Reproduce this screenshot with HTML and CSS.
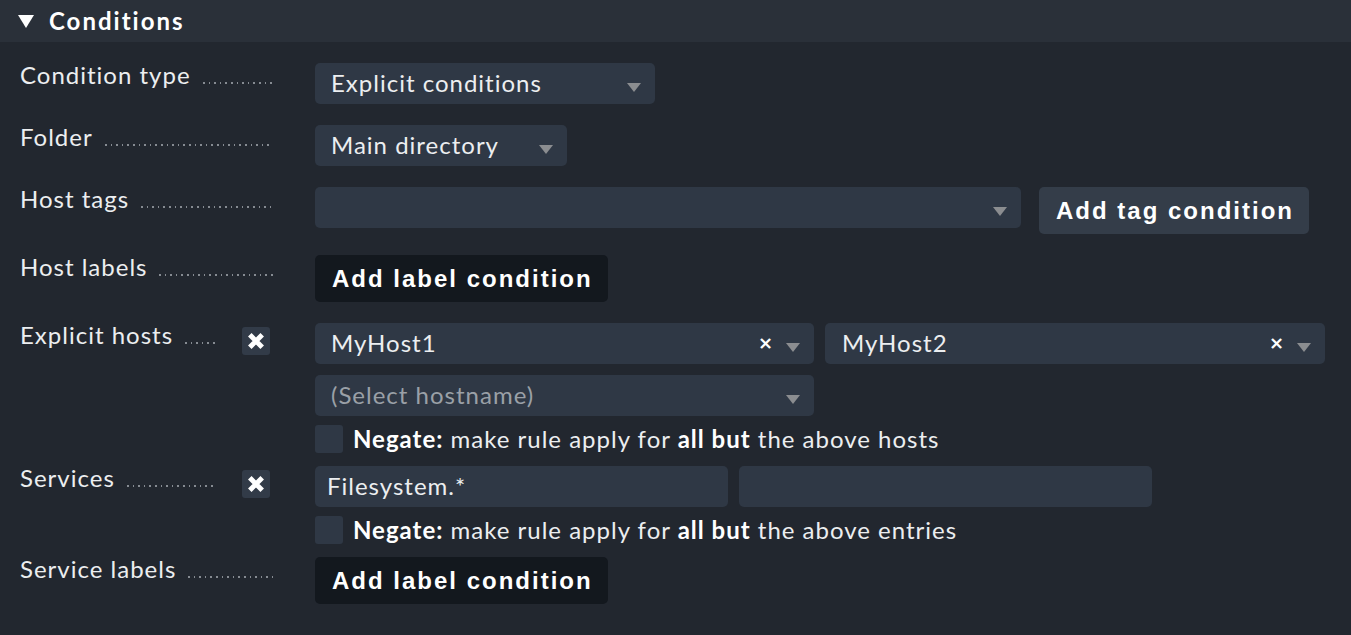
FILE: index.html
```html
<!DOCTYPE html>
<html>
<head>
<meta charset="utf-8">
<link rel="stylesheet" href="styles.css">
</head>
<body>
<div class="panel">
  <div class="head"><span class="tri"></span><span class="title">Conditions</span></div>
  <div class="body">
    <div class="row">
      <div class="label"><span class="ltext">Condition type</span><span class="dots"></span></div>
      <div class="ctrl">
        <div class="select w-type"><span class="val">Explicit conditions</span><span class="arrow"></span></div>
      </div>
    </div>
    <div class="row">
      <div class="label"><span class="ltext">Folder</span><span class="dots"></span></div>
      <div class="ctrl">
        <div class="select w-folder"><span class="val">Main directory</span><span class="arrow"></span></div>
      </div>
    </div>
    <div class="row">
      <div class="label"><span class="ltext">Host tags</span><span class="dots"></span></div>
      <div class="ctrl">
        <div class="line">
          <div class="select w-tags"><span class="val"></span><span class="arrow"></span></div>
          <button class="btn btn-light">Add tag condition</button>
        </div>
      </div>
    </div>
    <div class="row">
      <div class="label"><span class="ltext">Host labels</span><span class="dots"></span></div>
      <div class="ctrl">
        <button class="btn btn-dark">Add label condition</button>
      </div>
    </div>
    <div class="row tight">
      <div class="label"><span class="ltext">Explicit hosts</span><span class="dots"></span>
        <span class="del"><svg width="18" height="18" viewBox="0 0 18 18"><path d="M2.8 2.8 L15.2 15.2 M15.2 2.8 L2.8 15.2" stroke="#fff" stroke-width="5" stroke-linecap="butt"/></svg></span>
      </div>
      <div class="ctrl">
        <div class="line gap11">
          <div class="select w-host"><span class="val">MyHost1</span><span class="clear">×</span><span class="arrow"></span></div>
          <div class="select w-host2"><span class="val">MyHost2</span><span class="clear">×</span><span class="arrow"></span></div>
        </div>
        <div class="select w-host mt11"><span class="val ph">(Select hostname)</span><span class="arrow"></span></div>
        <div class="negate"><span class="cb"></span><span class="ntext"><b>Negate:</b> make rule apply for <b>all but</b> the above hosts</span></div>
      </div>
    </div>
    <div class="row tight">
      <div class="label"><span class="ltext">Services</span><span class="dots"></span>
        <span class="del"><svg width="18" height="18" viewBox="0 0 18 18"><path d="M2.8 2.8 L15.2 15.2 M15.2 2.8 L2.8 15.2" stroke="#fff" stroke-width="5" stroke-linecap="butt"/></svg></span>
      </div>
      <div class="ctrl">
        <div class="line gap11">
          <div class="text-in w-svc">Filesystem.*</div>
          <div class="text-in w-svc"></div>
        </div>
        <div class="negate"><span class="cb"></span><span class="ntext"><b>Negate:</b> make rule apply for <b>all but</b> the above entries</span></div>
      </div>
    </div>
    <div class="row">
      <div class="label"><span class="ltext">Service labels</span><span class="dots"></span></div>
      <div class="ctrl">
        <button class="btn btn-dark">Add label condition</button>
      </div>
    </div>
  </div>
</div>
</body>
</html>
```
FILE: styles.css
```css
* { box-sizing: border-box; }
html, body { margin: 0; padding: 0; }
body {
  background: #22272f;
  font-family: Lato, "Liberation Sans", sans-serif;
  color: #eceef0;
  width: 1351px;
  height: 635px;
  overflow: hidden;
}
.panel { background: #22272f; min-height: 635px; }
.head {
  height: 42px;
  background: #2a3039;
  display: flex;
  align-items: center;
  padding-left: 18px;
}
.tri {
  width: 0; height: 0;
  border-left: 8.5px solid transparent;
  border-right: 8.5px solid transparent;
  border-top: 13px solid #ffffff;
  margin-right: 15px;
  margin-top: 1px;
}
.title {
  font-weight: 700;
  font-size: 24px;
  letter-spacing: 2px;
  color: #ffffff;
  line-height: 28px;
}
.body { padding: 21px 0 0 20px; }
.row { display: flex; margin-bottom: 21px; }
.row.tight { margin-bottom: 13px; }
.label {
  width: 253px;
  flex: none;
  display: flex;
  align-items: flex-start;
  margin-right: 42px;
}
.ltext {
  font-size: 24px;
  line-height: 22px;
  letter-spacing: 1px;
  white-space: nowrap;
  color: #eceef0;
  padding-top: 1px;
}
.dots {
  flex: 1;
  height: 2px;
  margin: 19px 0 0 12px;
  background: repeating-linear-gradient(to right, #868b92 0 1.6px, transparent 1.6px 5.6px);
}
.del {
  width: 28px; height: 28px;
  flex: none;
  margin: 4px 3px 0 27px;
  background: #323b48;
  border-radius: 3px;
  display: flex;
  align-items: center;
  justify-content: center;
}
.ctrl { display: flex; flex-direction: column; align-items: flex-start; }
.line { display: flex; align-items: flex-start; gap: 18px; }
.line.gap11 { gap: 11px; }
.select {
  height: 41px;
  background: #2f3845;
  border-radius: 5px;
  display: flex;
  align-items: center;
  padding: 0 14px 2px 16px;
  font-size: 24px;
  letter-spacing: 1px;
  color: #eceef0;
}
.select .val { flex: 1; white-space: nowrap; }
.select .val.ph { color: #9aa0a7; }
.arrow {
  width: 0; height: 0;
  border-left: 7.5px solid transparent;
  border-right: 7.5px solid transparent;
  border-top: 9px solid #8b8d90;
  margin-top: 10px;
}
.clear {
  font-family: "DejaVu Sans", sans-serif;
  font-size: 18px;
  letter-spacing: 0;
  color: #ffffff;
  margin-right: 13px;
  font-weight: 700;
}
.w-type { width: 340px; }
.w-folder { width: 252px; }
.w-tags { width: 706px; }
.w-host { width: 499px; }
.w-host2 { width: 500px; padding-left: 17px; }
.mt11 { margin-top: 11px; }
.text-in {
  height: 41px;
  background: #2f3845;
  border-radius: 5px;
  padding: 0 12px 2px;
  display: flex;
  align-items: center;
  font-size: 24px;
  letter-spacing: 1px;
  color: #eceef0;
}
.w-svc { width: 413px; }
.btn {
  height: 47px;
  border: none;
  border-radius: 5px;
  padding: 0 15px 0 17px;
  font-family: "Liberation Sans", Arial, sans-serif;
  font-weight: 700;
  font-size: 24px;
  letter-spacing: 2px;
  color: #ffffff;
  cursor: pointer;
}
.btn-light { background: #343d49; }
.btn-dark { background: #13181e; }
.negate {
  display: flex;
  align-items: center;
  margin-top: 9px;
  height: 28px;
}
.cb {
  width: 28px; height: 28px;
  background: #2f3845;
  border-radius: 3px;
  margin-right: 10px;
  flex: none;
}
.ntext { font-size: 24px; letter-spacing: 1px; white-space: nowrap; color: #eceef0; padding-bottom: 2px; }
.ntext b { font-weight: 700; color: #ffffff; }
```
